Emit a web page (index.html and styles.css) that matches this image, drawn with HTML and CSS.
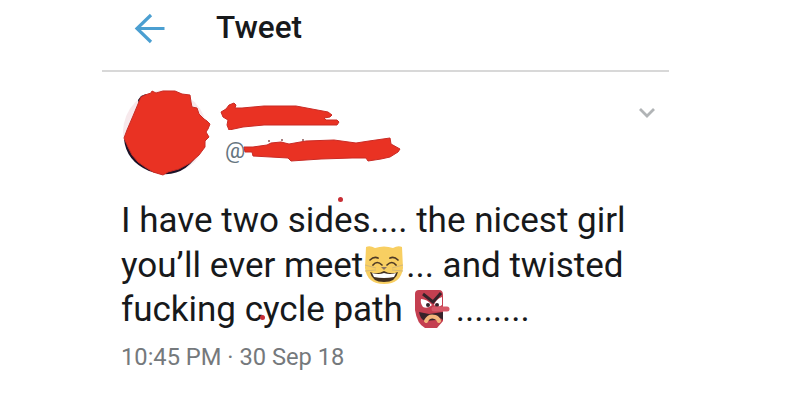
FILE: index.html
```html
<!DOCTYPE html>
<html lang="en">
<head>
    <meta charset="UTF-8">
    <meta name="viewport" content="width=device-width, initial-scale=1.0">
    <title>Tweet</title>
    <link rel="stylesheet" href="styles.css">
</head>
<body>
    <div class="tweet-page">
        <header class="top-bar">
            <svg class="back-icon" viewBox="0 0 32 32">
                <path d="M30.500 15.500H3M17 2L3 15.500L17 29"/>
            </svg>
            <h1 class="title">Tweet</h1>
        </header>

        <div class="author">
            <svg class="avatar" viewBox="0 0 90 90">
                <circle class="avatar-back" cx="44" cy="45" r="42"/>
                <path class="avatar-shade" d="M17 13L20 9L25 7L24 12L18 17ZM3 52Q5 74 28 84Q62 96 80 62L70 67L42 84L22 74Z"/>
                <path class="marker" d="M20 10L24 8L30 6L31 4L35 6L42 4L54 4L61 7L69 8L70 15L71 20L76 21L78 27L83 32L86 34L89 37L87 42L85 45L88 50L84 54L84 60L78 68L69 76L58 82L47 85L42 88L32 85L24 80L17 75L11 68L7 60L3 51L6 43L12 29L17 17Z"/>
            </svg>
            <div class="names">
                <svg class="name-marker" viewBox="0 0 122 28">
                    <path class="marker" d="M1 10L6 7L9 3L14 1L16 3L15 6L22 6L44 4L76 4L92 7L108 10L112 13L110 15L104 16L106 18L117 18L119 20L117 23L44 23L23 25L9 28L7 23L8 18L3 15Z"/>
                </svg>
                <div class="handle">
                    <span>@</span>
                    <svg class="handle-marker" viewBox="0 0 160 28">
                        <path class="marker" d="M3 10L12 10L26 8L30 6L40 5L48 7L65 4L93 3L115 6L128 4L149 1L150 7L159 12L157 15L149 20L140 22L127 24L125 21L111 21L80 22L50 24L47 21L12 19L11 15L4 15Z"/>
                        <path class="specks" d="M27 4h2M40 3h2M61 3h2"/>
                    </svg>
                </div>
            </div>
            <svg class="menu-icon" viewBox="0 0 18 12">
                <path d="M2 2L9 9L16 2"/>
            </svg>
        </div>

        <div class="tweet-text">
            <div class="line">I have two sides.... the nicest girl</div>
            <div class="line">
                <span>you’ll ever meet</span>
                <svg class="emoji" viewBox="0 0 38 38">
                    <path fill="#f8cf62" d="M1 1Q5-1 10 2Q19-1 28 2Q33-1 37 1L38 22Q36 38 19 38Q2 38 0 22Z"/>
                    <path fill="none" stroke="#d4b878" d="M0 19L11 22M0 25L11 24M38 19L27 22M38 25L27 24"/>
                    <path fill="none" stroke="#4e3a25" stroke-width="1.700" stroke-linecap="round" d="M5 14Q9 10 13 12M25 12Q29 10 33 14M8 19Q12 14 17 19M22 19Q27 14 31 19"/>
                    <path fill="#8a7466" d="M16 21H22L19 24Z"/>
                    <path fill="#42301f" d="M5 26Q12 29 19 25Q26 29 33 26Q31 36 19 36Q7 36 5 26Z"/>
                    <path fill="#fff" d="M7 27Q14 29 19 27Q25 29 31 27L29 31Q19 33 9 31Z"/>
                </svg>
                <span>... and twisted</span>
            </div>
            <div class="line">
                <span>fucking cycle path</span>
                <svg class="emoji mask" viewBox="0 0 38 38">
                    <path fill="#c43f50" d="M4 0H24Q28 0 28 5V31L22 38H10Q2 34 0 20V4Q0 0 4 0Z"/>
                    <path fill="#fff" d="M6 9Q12 9 17 15Q13 19 8 17Q5 13 6 9ZM27 7V15Q23 18 19 15Q21 9 27 7Z"/>
                    <path fill="none" stroke="#36232a" stroke-width="3" d="M8 4L18 12L26 3"/>
                    <circle cx="13" cy="15" r="2" fill="#36232a"/>
                    <circle cx="22" cy="15" r="2" fill="#36232a"/>
                    <path fill="#36232a" d="M4 22L14 24L28 22V30Q24 26 21 30L10 31Q5 29 4 22Z"/>
                    <path fill="none" stroke="#f4b67b" stroke-width="4" stroke-linecap="round" d="M11 31Q14 25 20 27Q23 28 24 31"/>
                    <path fill="none" stroke="#d65867" stroke-width="5" stroke-linecap="round" d="M19 19H32"/>
                </svg>
                <span>........</span>
            </div>
            <i class="red-dot dot-top"></i>
            <i class="red-dot dot-bottom"></i>
        </div>

        <div class="date">10:45 PM · 30 Sep 18</div>
    </div>
</body>
</html>
```
FILE: styles.css
```css
body {
    margin: 0;
    background-color: #fff;
    font-family: Roboto, "Liberation Sans", sans-serif;
    color: #17191b;
}
.tweet-page {
    width: 567px;
    margin-left: 102px;
}
.top-bar {
    display: flex;
    align-items: flex-start;
    height: 70px;
    border-bottom: 2px solid #d8d8d8;
}
.back-icon {
    width: 32px;
    height: 32px;
    margin: 13px 0 0 32px;
    fill: none;
    stroke: #4b9fd1;
    stroke-width: 3.2;
}
.title {
    margin: 10px 0 0 50px;
    font-size: 31.5px;
    line-height: 36px;
    font-weight: 500;
}
.author {
    display: flex;
    align-items: flex-start;
    height: 126px;
}
.avatar {
    width: 90px;
    height: 90px;
    margin: 15px 0 0 19px;
}
.avatar-back {
    fill: #f7e9ec;
}
.avatar-shade {
    fill: #1c1227;
}
.marker {
    fill: #e93223;
    stroke: #c92b25;
    stroke-width: 1;
    stroke-linejoin: round;
}
.names {
    display: flex;
    flex-direction: column;
    width: 190px;
    margin: 30px 0 0 9px;
}
.name-marker {
    width: 122px;
    height: 28px;
}
.handle {
    display: flex;
    height: 28px;
    margin: 7px 0 0 5px;
    font-size: 22.5px;
    line-height: 26px;
    color: #66757f;
}
.handle-marker {
    width: 160px;
    height: 28px;
    margin-left: -4px;
}
.specks {
    stroke: #8a5557;
    stroke-width: 1.5;
}
.menu-icon {
    width: 18px;
    height: 12px;
    margin: 35px 13px 0 auto;
    fill: none;
    stroke: #b1b4b6;
    stroke-width: 2.8;
}
.tweet-text {
    position: relative;
    padding-left: 19px;
    font-size: 35px;
    line-height: 45px;
}
.line {
    display: flex;
    height: 44.5px;
    white-space: nowrap;
}
.emoji {
    width: 38px;
    height: 38px;
    margin: 3px 3px 0 2px;
    overflow: visible;
}
.mask {
    margin-left: 12px;
}
.red-dot {
    position: absolute;
    width: 5px;
    height: 5px;
    border-radius: 50%;
    background-color: #c82e35;
}
.dot-top {
    left: 236px;
    top: -1px;
}
.dot-bottom {
    left: 158px;
    top: 117px;
}
.date {
    margin: 11px 0 0 19px;
    font-size: 23.7px;
    line-height: 28px;
    color: #75797c;
}
```
